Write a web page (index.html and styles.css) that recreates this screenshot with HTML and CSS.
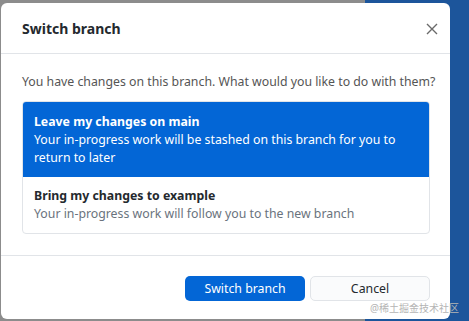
FILE: index.html
```html
<!DOCTYPE html>
<html lang="en">
<head>
    <meta charset="UTF-8">
    <title>Switch branch</title>
    <link rel="stylesheet" href="styles.css">
</head>
<body>
    <div class="dialog">
        <div class="dialog-header">
            <div class="dialog-title">Switch branch</div>
            <svg class="close" width="12" height="12" viewBox="0 0 12 12">
                <path d="M1 1 L11 11 M11 1 L1 11" stroke="#6a6a6a" stroke-width="1.4" fill="none"/>
            </svg>
        </div>
        <div class="dialog-body">
            <div class="question">You have changes on this branch. What would you like to do with them?</div>
            <div class="options">
                <div class="option selected">
                    <div class="option-title">Leave my changes on main</div>
                    <div class="option-desc">Your in-progress work will be stashed on this branch for you to return to later</div>
                </div>
                <div class="option">
                    <div class="option-title">Bring my changes to example</div>
                    <div class="option-desc">Your in-progress work will follow you to the new branch</div>
                </div>
            </div>
        </div>
        <div class="dialog-footer">
            <button class="btn btn-primary">Switch branch</button>
            <button class="btn btn-cancel">Cancel</button>
        </div>
        <div class="watermark">@稀土掘金技术社区</div>
    </div>
</body>
</html>
```

FILE: styles.css
```css
* {
    margin: 0;
    padding: 0;
    box-sizing: border-box;
}

body {
    font-family: 'Noto Sans', 'Noto Sans CJK SC', sans-serif;
    font-size: 12.3px;
    color: #24292e;
    height: 100vh;
    overflow: hidden;
    background: linear-gradient(to right, #8c8c8c 365px, #1c559b 365px);
    padding: 3px 0 0 1px;
}

.dialog {
    position: relative;
    width: 449px;
    height: 316px;
    background: #fff;
    border-radius: 6px;
}

.dialog-header {
    height: 51px;
    display: flex;
    align-items: center;
    justify-content: space-between;
    padding: 0 12px 0 21px;
    border-bottom: 1px solid #e1e4e8;
}

.dialog-title {
    font-size: 14px;
    font-weight: bold;
    color: #24292e;
}

.close {
    margin-top: 1px;
}

.dialog-body {
    padding: 20px 20px 21px 21px;
    border-bottom: 1px solid #e1e4e8;
}

.question {
    line-height: 16px;
    color: #555;
    margin-bottom: 11px;
    white-space: nowrap;
}

.options {
    border: 1px solid #e1e4e8;
    border-radius: 4px;
    overflow: hidden;
}

.option {
    padding: 10px 11px;
    line-height: 18px;
}

.option.selected {
    background: #0366d6;
    color: #fff;
    padding: 11px 11px 10px;
}

.option-title {
    font-weight: bold;
}

.option-desc {
    color: #6a737d;
}

.option.selected .option-desc {
    color: #fff;
}

.dialog-footer {
    display: flex;
    justify-content: flex-end;
    gap: 5px;
    padding: 20px 20px 0 0;
}

.btn {
    width: 120px;
    height: 25px;
    border-radius: 5px;
    font-family: inherit;
    font-size: 12.3px;
}

.btn-primary {
    background: #0366d6;
    color: #fff;
    border: none;
}

.btn-cancel {
    background: #fafbfc;
    color: #24292e;
    border: 1px solid #e1e4e8;
}

.watermark {
    position: absolute;
    right: -9px;
    bottom: 4px;
    font-size: 10px;
    color: #b5b5b5;
}
```
